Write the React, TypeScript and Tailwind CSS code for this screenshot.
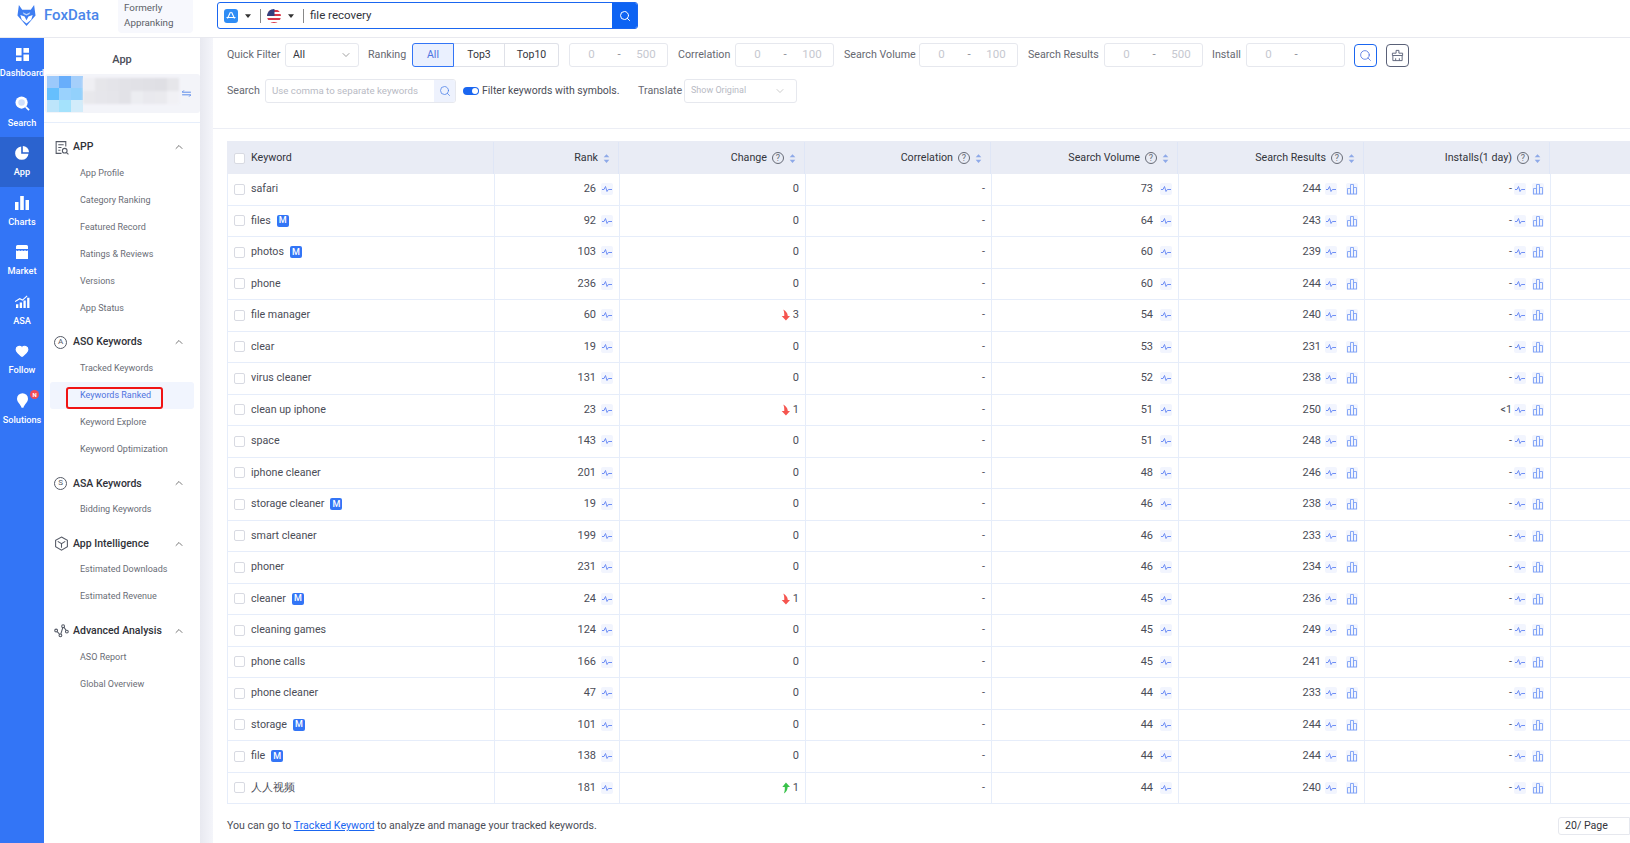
import { ChevronDown, ChevronUp, Search, Heart } from "lucide-react"

const rows = [
    { k: "safari", rank: 26, change: "0", vol: 73, res: 244, ins: "-" },
    { k: "files", m: true, rank: 92, change: "0", vol: 64, res: 243, ins: "-" },
    { k: "photos", m: true, rank: 103, change: "0", vol: 60, res: 239, ins: "-" },
    { k: "phone", rank: 236, change: "0", vol: 60, res: 244, ins: "-" },
    { k: "file manager", rank: 60, change: "3", dir: "down", vol: 54, res: 240, ins: "-" },
    { k: "clear", rank: 19, change: "0", vol: 53, res: 231, ins: "-" },
    { k: "virus cleaner", rank: 131, change: "0", vol: 52, res: 238, ins: "-" },
    { k: "clean up iphone", rank: 23, change: "1", dir: "down", vol: 51, res: 250, ins: "<1" },
    { k: "space", rank: 143, change: "0", vol: 51, res: 248, ins: "-" },
    { k: "iphone cleaner", rank: 201, change: "0", vol: 48, res: 246, ins: "-" },
    { k: "storage cleaner", m: true, rank: 19, change: "0", vol: 46, res: 238, ins: "-" },
    { k: "smart cleaner", rank: 199, change: "0", vol: 46, res: 233, ins: "-" },
    { k: "phoner", rank: 231, change: "0", vol: 46, res: 234, ins: "-" },
    { k: "cleaner", m: true, rank: 24, change: "1", dir: "down", vol: 45, res: 236, ins: "-" },
    { k: "cleaning games", rank: 124, change: "0", vol: 45, res: 249, ins: "-" },
    { k: "phone calls", rank: 166, change: "0", vol: 45, res: 241, ins: "-" },
    { k: "phone cleaner", rank: 47, change: "0", vol: 44, res: 233, ins: "-" },
    { k: "storage", m: true, rank: 101, change: "0", vol: 44, res: 244, ins: "-" },
    { k: "file", m: true, rank: 138, change: "0", vol: 44, res: 244, ins: "-" },
    { k: "人人视频", rank: 181, change: "1", dir: "up", vol: 44, res: 240, ins: "-" },
]

const gridCols = "grid grid-cols-[267px_125px_186px_186px_187px_186px_186px_1fr]"

// blurred app name in the card
const mosaic = [
    "#efeff3", "#e6e6ea", "#e4e4e9", "#e2e2e7", "#e1e1e6", "#e0e0e5", "#dfdfe4", "#e6e6ea",
    "#e8e8ec", "#e6e6eb", "#e5e5ea", "#e2e2e7", "#ecedf1", "#e9e9ee", "#eaeaee", "#f1f1f5",
]

function Spark() {
    return (
        <span className="flex h-[12px] w-[12px] shrink-0 items-center justify-center rounded-[2px] bg-[#f2f5fe]">
            <svg viewBox="0 0 12 12" className="h-[12px] w-[12px]" fill="none" stroke="#6f8ff5" strokeWidth="1">
                <path d="M1 6.500h2l1.500-3L6 8.500l1.300-2H11" />
            </svg>
        </span>
    )
}

function Bars() {
    return (
        <span className="flex h-[12px] w-[12px] shrink-0 items-center justify-center rounded-[2px] bg-[#f2f5fe]">
            <svg viewBox="0 0 12 12" className="h-[12px] w-[12px]" fill="none" stroke="#7ea2f6" strokeWidth="0.9">
                <path d="M1.500 11V5.500h3V11M4.500 11V1.500h3V11M7.500 11V4.500h3V11M1 11h10" />
            </svg>
        </span>
    )
}

function Sort() {
    return (
        <svg viewBox="0 0 8 12" className="h-[11px] w-[7px] shrink-0" fill="#8ea9e8">
            <path d="M4 1l3.200 3.600H.8zM4 11L.8 7.400h6.400z" />
        </svg>
    )
}

function Help() {
    return (
        <span className="flex h-[12px] w-[12px] shrink-0 items-center justify-center rounded-full border border-[#666a75] text-[9px] leading-none text-[#666a75]">
            ?
        </span>
    )
}

function Arrow({ dir }: { dir: string }) {
    if (dir === "up") {
        return (
            <svg viewBox="0 0 10 12" className="h-[12px] w-[9px] shrink-0" fill="#39c24a">
                <path d="M5.500 0L10 5H7.400C7.200 8 6 10.500 3.200 12 4.200 9.800 4.400 7.500 4.200 5H1.500z" />
            </svg>
        )
    }
    return (
        <svg viewBox="0 0 10 12" className="h-[12px] w-[9px] shrink-0" fill="#f5554f">
            <path d="M5.500 12L10 7H7.600C7.200 4 5.500 1.500 2.500 0 3.500 2.200 3.800 4.500 3.600 7H.8z" />
        </svg>
    )
}

function HeadCell({ label, help }: { label: string; help?: boolean }) {
    return (
        <div className="flex items-center justify-end gap-[5px] border-r border-[#dfe6f6] pr-[8px]">
            <span>{label}</span>
            {help && <Help />}
            <Sort />
        </div>
    )
}

function Range({ to }: { to?: string }) {
    return (
        <div className="flex h-[24px] w-[99px] shrink-0 items-center rounded-[3px] border border-[#e6e8ee] text-[11.500px] text-[#c6c8d0]">
            <span className="w-[43px] text-center">0</span>
            <span className="w-[12px] text-center text-[#8a8d96]">-</span>
            <span className="flex-1 text-center">{to}</span>
        </div>
    )
}

function NavItem({ label, icon, active, badge }: { label: string; icon: React.ReactNode; active?: boolean; badge?: boolean }) {
    return (
        <div className={`relative flex h-[49.500px] flex-col items-center pt-[8px] ${active ? "bg-[#2b63cf]" : ""}`}>
            <div className="flex h-[16px] items-center justify-center">{icon}</div>
            <span className="mt-[4px] text-[9.200px] font-medium leading-[14px] whitespace-nowrap text-white">{label}</span>
            {badge && (
                <span className="absolute left-[30px] top-[5px] flex h-[9px] w-[9px] items-center justify-center rounded-full bg-[#f04b55] text-[6px] font-bold text-white">
                    N
                </span>
            )}
        </div>
    )
}

function SideGroup({ title, icon, items }: { title: string; icon: React.ReactNode; items: string[] }) {
    return (
        <div className="mb-[7.200px]">
            <div className="flex h-[26px] items-center pl-[10px] pr-[15px]">
                <span className="flex w-[19px] shrink-0 justify-start">{icon}</span>
                <span className="text-[10.500px] font-medium text-[#2f3138]">{title}</span>
                <ChevronUp className="ml-auto h-[12px] w-[12px] text-[#555]" strokeWidth={1.6} />
            </div>
            {items.map((it) => (
                <div
                    key={it}
                    className={`relative mx-[6px] flex h-[27px] items-center rounded-[3px] pl-[30px] text-[9px] ${
                        it === "Keywords Ranked" ? "bg-[#f1f5fe] text-[#4f73e0]" : "text-[#6a6d76]"
                    }`}
                >
                    {it}
                    {it === "Keywords Ranked" && (
                        <span className="absolute left-[15.500px] top-[5px] h-[22px] w-[97px] rounded-[3px] border-[2px] border-[#f01414]" />
                    )}
                </div>
            ))}
        </div>
    )
}

const iconCls = "h-[15px] w-[15px] text-[#555a66]"

export default function App() {
    return (
        <div className="flex h-[843px] w-[1630px] flex-col overflow-hidden bg-white font-['Roboto',sans-serif] text-[#4b4d57]">
            {/* top bar */}
            <header className="flex h-[38px] shrink-0 border-b border-[#e8e9ef]">
                <div className="flex w-[118px] items-start pl-[17px] pt-[5px]">
                    <svg viewBox="0 0 20 22" className="h-[21px] w-[19px]">
                        <path d="M2 0l3.500 5h9L18 0l1.500 11L10 22 .5 11z" fill="#3d7df2" />
                        <path d="M3.500 10.500l4.500 1.500 2 4 2-4 4.500-1.500-1.500 5L10 19.500 5 15.500z" fill="#fff" />
                        <path d="M6 7.500L10 9.500 14 7.500 13 9.800 10 11 7 9.800z" fill="#bcd4fb" />
                    </svg>
                    <span className="ml-[8px] text-[15px] font-medium leading-[21px] text-[#4a86ea]">FoxData</span>
                </div>
                <div className="h-[33px] w-[75px] rounded-b-[4px] bg-[#f7f8fd] pl-[6px] text-[9.800px] leading-[15px] text-[#5c5f68]">
                    Formerly
                    <br />
                    Appranking
                </div>
                <div className="ml-[24px] mt-[2px] flex h-[27px] w-[421px] items-center overflow-hidden rounded-[3px] border border-[#1a66f0]">
                    <svg viewBox="0 0 14 14" className="ml-[6px] h-[14px] w-[14px] shrink-0">
                        <rect width="14" height="14" rx="3" fill="#2f8df5" />
                        <path d="M7.500 3l3 6.500M6.500 3l-3 6.500M2.500 8.500h9" stroke="#fff" strokeWidth="1.100" fill="none" />
                    </svg>
                    <svg viewBox="0 0 8 5" className="ml-[7px] h-[4px] w-[6px] shrink-0" fill="#333">
                        <path d="M0 0h8L4 5z" />
                    </svg>
                    <span className="ml-[9px] h-[14px] w-px bg-[#888]" />
                    <svg viewBox="0 0 14 14" className="ml-[6px] h-[14px] w-[14px] shrink-0">
                        <clipPath id="flag">
                            <circle cx="7" cy="7" r="7" />
                        </clipPath>
                        <g clipPath="url(#flag)">
                            <rect width="14" height="14" fill="#fff" />
                            <path d="M0 1h14v2H0zM0 5h14v2H0zM0 9h14v2H0zM0 13h14v1H0z" fill="#d8384a" />
                            <rect width="7.500" height="7" fill="#33407e" />
                        </g>
                    </svg>
                    <svg viewBox="0 0 8 5" className="ml-[7px] h-[4px] w-[6px] shrink-0" fill="#333">
                        <path d="M0 0h8L4 5z" />
                    </svg>
                    <span className="ml-[9px] h-[14px] w-px bg-[#888]" />
                    <span className="ml-[6px] text-[11.500px] text-[#33353c]">file recovery</span>
                    <div className="ml-auto flex h-full w-[25px] items-center justify-center bg-[#0d63f3]">
                        <Search className="h-[12px] w-[12px] text-white" strokeWidth={2} />
                    </div>
                </div>
            </header>

            <div className="flex min-h-0 flex-1">
                {/* icon rail */}
                <nav className="w-[44px] shrink-0 bg-[#3375f6]">
                    <NavItem
                        label="Dashboard"
                        icon={
                            <svg viewBox="0 0 14 14" className="h-[13px] w-[13px]" fill="#fff">
                                <path d="M0 0h6v8H0zM8 0h6v5H8zM0 10h6v4H0zM8 7h6v7H8z" />
                            </svg>
                        }
                    />
                    <NavItem
                        label="Search"
                        icon={
                            <svg viewBox="0 0 16 16" className="h-[15px] w-[15px]">
                                <circle cx="7" cy="7" r="6.500" fill="#fff" />
                                <circle cx="7" cy="7" r="3.500" fill="#cfdffb" />
                                <path d="M11.500 11.500L15 15" stroke="#fff" strokeWidth="1.800" />
                            </svg>
                        }
                    />
                    <NavItem
                        label="App"
                        active
                        icon={
                            <svg viewBox="0 0 14 14" className="h-[14px] w-[14px]" fill="#fff">
                                <path d="M6.200 .5A6.700 6.700 0 1 0 13.500 7.800H6.200z" />
                                <path d="M7.800 0A6.400 6.400 0 0 1 14 6.200H7.800z" />
                            </svg>
                        }
                    />
                    <NavItem
                        label="Charts"
                        icon={
                            <svg viewBox="0 0 14 14" className="h-[14px] w-[14px]" fill="#fff">
                                <path d="M0 6h3.500v8H0zM5.200 0h3.600v14H5.200zM10.500 4H14v10h-3.500z" />
                            </svg>
                        }
                    />
                    <NavItem
                        label="Market"
                        icon={
                            <svg viewBox="0 0 14 14" className="h-[14px] w-[14px]" fill="#fff">
                                <path d="M2.500 0h9A1.500 1.500 0 0 1 13 1.500V4H1V1.500A1.500 1.500 0 0 1 2.500 0z" />
                                <path d="M1 5.200c1 .9 2 .9 3 0 1 .9 2 .9 3 0 1 .9 2 .9 3 0 1 .9 2 .9 3 0V14H1z" />
                            </svg>
                        }
                    />
                    <NavItem
                        label="ASA"
                        icon={
                            <svg viewBox="0 0 16 14" className="h-[13px] w-[15px]" fill="#fff">
                                <path d="M1 10h2.500v4H1zM5 8h2.500v6H5zM9 6h2.500v8H9zM13 3h2.500v11H13z" />
                                <path d="M0 7l5-3 3 1.500L13 1" stroke="#fff" strokeWidth="1.200" fill="none" />
                            </svg>
                        }
                    />
                    <NavItem label="Follow" icon={<Heart className="h-[14px] w-[14px] fill-white text-white" />} />
                    <NavItem
                        label="Solutions"
                        badge
                        icon={
                            <svg viewBox="0 0 12 16" className="h-[15px] w-[11px]" fill="#fff">
                                <path d="M6 0a6 6 0 0 1 6 6c0 4-4 6-5 10H5C4 12 0 10 0 6a6 6 0 0 1 6-6z" />
                            </svg>
                        }
                    />
                </nav>

                {/* secondary sidebar */}
                <aside className="w-[156px] shrink-0 bg-white">
                    <div className="flex h-[36px] items-end justify-center pb-[6px] text-[11px] font-medium text-[#4b4d57]">App</div>
                    <div className="ml-px flex h-[39px] items-center rounded-[3px] bg-[#f3f4f9] pr-[9px]">
                        <div className="ml-[2px] grid shrink-0 grid-cols-[repeat(3,12px)] grid-rows-[repeat(3,12px)] blur-[0.6px]">
                            <span className="bg-[#9cc9fb]" />
                            <span className="bg-[#68aefb]" />
                            <span className="bg-[#a5cffb]" />
                            <span className="bg-[#66bffd]" />
                            <span className="bg-[#9ad2fd]" />
                            <span className="bg-[#93d1fc]" />
                            <span className="bg-[#bde5fb]" />
                            <span className="bg-[#a4e2fc]" />
                            <span className="bg-[#d2ecfa]" />
                        </div>
                        <div className="mb-[6px] grid shrink-0 grid-cols-[repeat(8,12px)] grid-rows-[repeat(2,13px)] blur-[1px]">
                            {mosaic.map((c, i) => (
                                <span key={i} style={{ backgroundColor: c }} />
                            ))}
                        </div>
                        <svg viewBox="0 0 10 8" className="ml-auto h-[7px] w-[9px] shrink-0" fill="none" stroke="#4a7fe8" strokeWidth="1">
                            <path d="M0 2.500h10M2 .5L0 2.500M0 5.500h10M8 7.500l2-2" />
                        </svg>
                    </div>
                    <div className="mb-[11px] mt-[9px] border-t border-[#e6eefb]" />
                    <SideGroup
                        title="APP"
                        icon={
                            <svg viewBox="0 0 14 14" className={iconCls} fill="none" stroke="currentColor" strokeWidth="1">
                                <path d="M11 6V1.500H2v11h5M4 4.500h5M4 7h3M4 9.500h2" />
                                <circle cx="10" cy="10" r="2.200" />
                                <path d="M11.700 11.700L13.500 13.500" />
                            </svg>
                        }
                        items={["App Profile", "Category Ranking", "Featured Record", "Ratings & Reviews", "Versions", "App Status"]}
                    />
                    <SideGroup
                        title="ASO Keywords"
                        icon={
                            <span className="flex h-[13px] w-[13px] items-center justify-center rounded-full border border-[#555a66] text-[8px] leading-none text-[#555a66]">
                                A
                            </span>
                        }
                        items={["Tracked Keywords", "Keywords Ranked", "Keyword Explore", "Keyword Optimization"]}
                    />
                    <SideGroup
                        title="ASA Keywords"
                        icon={
                            <span className="flex h-[13px] w-[13px] items-center justify-center rounded-full border border-[#555a66] text-[8px] leading-none text-[#555a66]">
                                S
                            </span>
                        }
                        items={["Bidding Keywords"]}
                    />
                    <SideGroup
                        title="App Intelligence"
                        icon={
                            <svg viewBox="0 0 14 14" className={iconCls} fill="none" stroke="currentColor" strokeWidth="1">
                                <path d="M7 1l5.500 3v6L7 13.200 1.500 10V4zM3.500 5L7 7.200 10.500 5M7 7.200V11" />
                            </svg>
                        }
                        items={["Estimated Downloads", "Estimated Revenue"]}
                    />
                    <SideGroup
                        title="Advanced Analysis"
                        icon={
                            <svg viewBox="0 0 14 14" className={iconCls} fill="none" stroke="currentColor" strokeWidth="1">
                                <circle cx="2" cy="7" r="1.300" />
                                <circle cx="6" cy="11.500" r="1.300" />
                                <circle cx="8.500" cy="3" r="1.300" />
                                <circle cx="12" cy="8" r="1.300" />
                                <path d="M3 8l2.200 2.500M6.400 10.200L8.200 4.300M9.300 4l2 2.900" />
                            </svg>
                        }
                        items={["ASO Report", "Global Overview"]}
                    />
                </aside>

                <div className="w-[13px] shrink-0 bg-gradient-to-r from-[#e8e9f0] to-[#f4f5fa]" />

                {/* main */}
                <main className="min-w-0 flex-1 overflow-hidden pt-[5px] text-[10.700px]">
                    <div className="border-b border-[#eceef5] pl-[14px] text-[#666871]">
                        <div className="flex h-[24px] items-center whitespace-nowrap">
                            <span className="w-[58px] shrink-0">Quick Filter</span>
                            <div className="flex h-[24px] w-[74px] shrink-0 items-center justify-between rounded-[3px] border border-[#e6e8ee] pl-[7px] pr-[6px] text-[10.500px] text-[#33353c]">
                                All
                                <ChevronDown className="h-[12px] w-[12px] text-[#777]" strokeWidth={1.4} />
                            </div>
                            <span className="ml-[9px] w-[44px] shrink-0">Ranking</span>
                            <div className="flex h-[24px] shrink-0 text-[10.500px] text-[#33353c]">
                                <span className="flex w-[42px] items-center justify-center rounded-l-[3px] border border-[#3375f6] bg-[#eaf0fe] text-[#4f73e0]">All</span>
                                <span className="flex w-[51px] items-center justify-center border-y border-r border-[#dfe1e8]">Top3</span>
                                <span className="flex w-[54px] items-center justify-center rounded-r-[3px] border-y border-r border-[#dfe1e8]">Top10</span>
                            </div>
                            <div className="ml-[10px]">
                                <Range to="500" />
                            </div>
                            <span className="ml-[10px] w-[57px] shrink-0">Correlation</span>
                            <Range to="100" />
                            <span className="ml-[10px] w-[75px] shrink-0">Search Volume</span>
                            <Range to="100" />
                            <span className="ml-[10px] w-[76px] shrink-0">Search Results</span>
                            <Range to="500" />
                            <span className="ml-[9px] w-[34px] shrink-0">Install</span>
                            <Range />
                            <span className="ml-[9px] flex h-[23px] w-[23px] shrink-0 items-center justify-center rounded-[4px] border border-[#1a66f0]">
                                <Search className="h-[13px] w-[13px] text-[#4f73e0]" strokeWidth={1.5} />
                            </span>
                            <span className="ml-[9px] flex h-[23px] w-[23px] shrink-0 items-center justify-center rounded-[4px] border border-[#5a6178]">
                                <svg viewBox="0 0 14 14" className="h-[13px] w-[13px]" fill="none" stroke="#5a6178" strokeWidth="1">
                                    <path d="M5.500 1.500h3v3h4v2.500h-11V4.500h4zM2 7v5.500h10V7M5 10v2.500M9 10v2.500" />
                                </svg>
                            </span>
                        </div>
                        <div className="mb-[25px] mt-[12px] flex h-[24px] items-center whitespace-nowrap">
                            <span className="w-[38px] shrink-0">Search</span>
                            <div className="flex h-[24px] w-[191px] shrink-0 items-center overflow-hidden rounded-[3px] border border-[#e6e8ee]">
                                <span className="flex-1 pl-[6px] text-[9.700px] text-[#b8bac4]">Use comma to separate keywords</span>
                                <span className="flex h-full w-[21px] items-center justify-center bg-[#eef2fd]">
                                    <Search className="h-[12px] w-[12px] text-[#4a7fe8]" strokeWidth={1.5} />
                                </span>
                            </div>
                            <span className="ml-[7px] flex h-[8px] w-[16px] shrink-0 items-center justify-end rounded-full bg-[#1a66f0] pr-[1px]">
                                <span className="h-[6px] w-[6px] rounded-full bg-white" />
                            </span>
                            <span className="ml-[3px] w-[156px] shrink-0 text-[10.500px] text-[#4b4d57]">Filter keywords with symbols.</span>
                            <span className="w-[46px] shrink-0">Translate</span>
                            <div className="flex h-[24px] w-[113px] shrink-0 items-center justify-between rounded-[3px] border border-[#e6e8ee] pl-[6px] pr-[10px] text-[9px] text-[#b8bac4]">
                                Show Original
                                <ChevronDown className="h-[12px] w-[12px] text-[#aaa]" strokeWidth={1.2} />
                            </div>
                        </div>
                    </div>

                    {/* table */}
                    <div className="ml-[14px] mt-[12px] w-[1403px] text-[10.700px]">
                        <div className={`${gridCols} h-[33px] bg-[#e9ecf5] pt-px text-[#33353c]`}>
                            <div className="flex items-center border-r border-[#dfe6f6] pl-[7px]">
                                <span className="mr-[6px] h-[11px] w-[11px] rounded-[2px] border border-[#d8dae2] bg-white" />
                                Keyword
                            </div>
                            <HeadCell label="Rank" />
                            <HeadCell label="Change" help />
                            <HeadCell label="Correlation" help />
                            <HeadCell label="Search Volume" help />
                            <HeadCell label="Search Results" help />
                            <HeadCell label="Installs(1 day)" help />
                            <div />
                        </div>
                        {rows.map((r) => (
                            <div key={r.k} className={`${gridCols} h-[31.500px] border-b border-l border-[#e6edfa]`}>
                                <div className="flex items-center border-r border-[#e6edfa] pl-[6px]">
                                    <span className="mr-[6px] h-[11px] w-[11px] rounded-[2px] border border-[#d8dae2]" />
                                    {r.k}
                                    {r.m && (
                                        <span className="ml-[6px] flex h-[12px] w-[12px] items-center justify-center rounded-[2px] bg-[#3375f6] text-[9px] font-medium text-white">
                                            M
                                        </span>
                                    )}
                                </div>
                                <div className="flex items-center justify-end gap-[5px] border-r border-[#e6edfa] pr-[6px] text-[11px]">
                                    {r.rank}
                                    <Spark />
                                </div>
                                <div className="flex items-center justify-end gap-[3px] border-r border-[#e6edfa] pr-[6px] text-[11px]">
                                    {r.dir && <Arrow dir={r.dir} />}
                                    {r.change}
                                </div>
                                <div className="flex items-center justify-end border-r border-[#e6edfa] pr-[6px]">-</div>
                                <div className="flex items-center justify-end gap-[7px] border-r border-[#e6edfa] pr-[6px] text-[11px]">
                                    {r.vol}
                                    <Spark />
                                </div>
                                <div className="flex items-center justify-end border-r border-[#e6edfa] pr-[6px] text-[11px]">
                                    {r.res}
                                    <span className="ml-[4px] mr-[9px]">
                                        <Spark />
                                    </span>
                                    <Bars />
                                </div>
                                <div className="flex items-center justify-end border-r border-[#e6edfa] pr-[6px]">
                                    {r.ins}
                                    <span className="ml-[2px] mr-[6px]">
                                        <Spark />
                                    </span>
                                    <Bars />
                                </div>
                                <div />
                            </div>
                        ))}
                    </div>

                    <div className="ml-[14px] mt-[13px] flex h-[18px] items-center text-[10.600px]">
                        <span>
                            You can go to{" "}
                            <span className="text-[#1a66f0] underline">Tracked Keyword</span> to analyze and manage your tracked keywords.
                        </span>
                        <div className="ml-auto flex h-[18px] w-[72px] items-center rounded-l-[3px] border border-[#e6e8ee] pl-[6px] text-[#33353c]">20/ Page</div>
                    </div>
                </main>
            </div>
        </div>
    )
}
